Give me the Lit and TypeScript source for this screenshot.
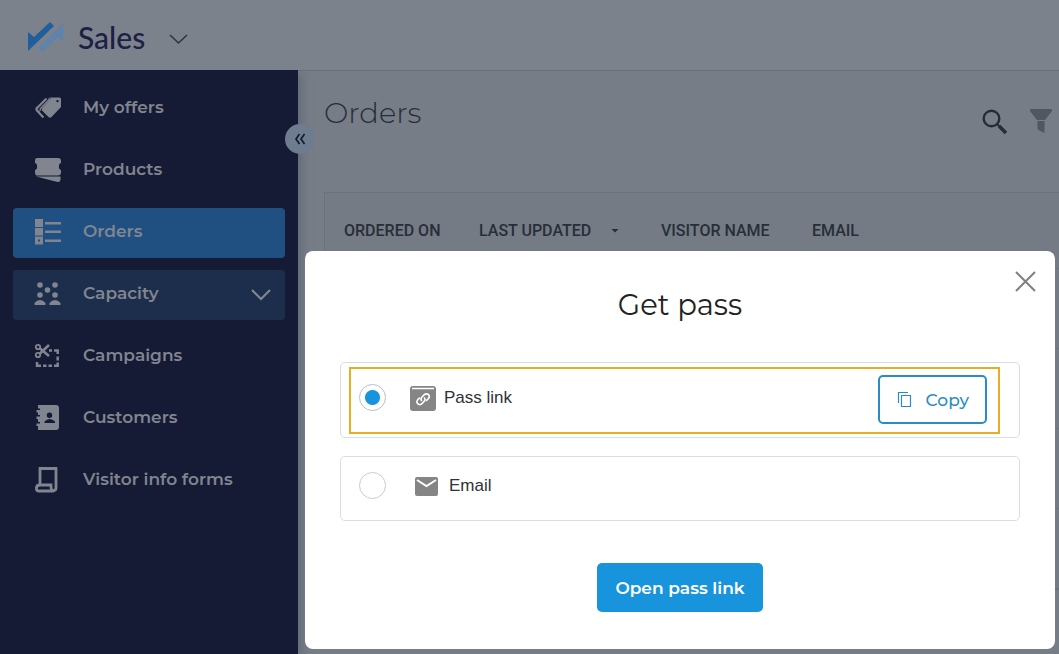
import { LitElement, html, css, svg } from "lit";
import { customElement, property, state } from "lit/decorators.js";

const icons: Record<string, unknown> = {
  offers: svg`<path fill="currentColor" fill-rule="evenodd" d="M15 3.500H25.500Q27 3.500 27 5V13L17.500 23.100Q16 24.500 14.500 23.100L8.400 17Q7 15.500 8.400 14L17 4.500ZM23.500 5.900A1.200 1.200 0 1 0 23.500 8.300A1.200 1.200 0 1 0 23.500 5.900Z"/><path d="M12.500 4.500L3.500 13.500Q1.500 15 3 16.500L9.500 23.500M16 4.500L6.200 14.500Q5 15.500 6.500 17" fill="none" stroke="currentColor" stroke-width="2.200"/><path d="M14.600 4.600L5.400 14.200Q4.600 15.200 5.600 16.400L12 23.500" fill="none" stroke="#151a35" stroke-width="1"/>`,
  products: svg`<path fill="currentColor" d="M3 2H24Q27 2 27 5V7Q24.500 8 25 10.500Q24.500 13 27 14V16Q27 19.500 24 19.500H3Q1 19.500 1 16V14Q3.500 13 3 10.500Q3.500 8 1 7V5Q1 2 3 2ZM2 20.500H26.500V24Q26 26.500 23.500 26Z"/>`,
  orders: svg`<path fill="currentColor" fill-rule="evenodd" d="M1 1H9V9H1ZM1 10H9V17.500H1ZM1 18.500H9V26.500H1ZM4 21.500V23.500H6V21.500ZM11 4H27V6.500H11ZM11 12.500H27V15H11ZM11 21.500H27V24H11Z"/>`,
  capacity: svg`<g fill="currentColor"><circle cx="6" cy="5" r="2.800"/><circle cx="21" cy="5" r="2.800"/><circle cx="13.500" cy="10" r="2.800"/><circle cx="6" cy="15" r="2.800"/><circle cx="21" cy="15" r="2.800"/><path d="M.500 25V23Q3 20 6 20T11.500 23V25ZM15.500 25V23Q18 20 21 20T26.500 23V25Z"/></g>`,
  campaigns: svg`<g fill="none" stroke="currentColor"><circle cx="4" cy="5" r="2.200" stroke-width="1.800"/><circle cx="4" cy="13" r="2.200" stroke-width="1.800"/><path stroke-width="2.600" d="M5.500 12L15 3M5.500 6L15 14"/><path stroke-width="2.500" d="M15 8.500H18M20 8.500H23.700V12M23.700 14.500V18.500M23.700 20.500V23.700H20M18 23.700H14.500M12.500 23.700H9M7 23.700H3V20"/></g>`,
  customers: svg`<path fill="currentColor" fill-rule="evenodd" d="M4 1H22Q25 1 25 4V23Q25 26 22 26H4V22H2.500V19.500H6V18H4V15H2.500V12.500H6V11H4V8.500H2.500V6H6V4.500H4ZM15.500 8.500A2.700 2.700 0 1 0 15.500 13.900A2.700 2.700 0 1 0 15.500 8.500ZM10.500 19H21V17.500Q18.500 15 15.700 15T10.500 17.500Z"/>`,
  forms: svg`<path fill="none" stroke="currentColor" stroke-width="2.800" d="M6 18V2.500H22V22Q22 25 18 25H5Q2 25 2.500 22Q2.500 19 6 19H17V21Q17 25 20 25"/>`,
};

const items = [
  ["offers", "My offers"],
  ["products", "Products"],
  ["orders", "Orders"],
  ["capacity", "Capacity"],
  ["campaigns", "Campaigns"],
  ["customers", "Customers"],
  ["forms", "Visitor info forms"],
];

@customElement("sales-nav")
class SalesNav extends LitElement {
  @property() current = "orders";

  static styles = css`
    :host { display: block; position: relative; background: #151a35; color: #80858f; box-shadow: 4px 4px 8px #656c77; }
    .list { display: flex; flex-direction: column; gap: 12px; margin: 0; padding: 14px 13px; list-style: none; }
    .item { display: flex; align-items: center; gap: 21px; box-sizing: border-box; height: 50px; padding: 0 13px 2px 21px; border-radius: 4px; color: inherit; font-size: 17px; line-height: 24px; font-weight: 600; text-decoration: none; }
    .current { background: #205081; }
    .group { background: #1c2e4b; }
    .icon { flex: none; }
    .label { flex: 1; padding-bottom: 2px; }
    .collapse { position: absolute; top: 54px; right: -17px; width: 30px; height: 30px; padding: 0; border: 0; border-radius: 50%; background: #6d7d8f; color: #151a35; display: grid; place-items: center; }
  `;

  render() {
    return html`<nav>
        <ul class="list">
          ${items.map(([id, label]) => html`<li>
            <a href="#${id}" class="item ${id === this.current ? "current" : ""} ${id === "capacity" ? "group" : ""}">
              <svg class="icon" width="28" height="28" viewBox="0 0 28 28" aria-hidden="true">${icons[id]}</svg>
              <span class="label">${label}</span>
              ${id === "capacity" ? html`<svg class="icon" width="22" height="14" viewBox="0 0 22 14" aria-hidden="true"><path d="M2 3L11 12L20 3" fill="none" stroke="currentColor" stroke-width="2.200"/></svg>` : ""}
            </a>
          </li>`)}
        </ul>
      </nav>
      <button class="collapse" aria-label="Collapse menu">
        <svg width="12" height="12" viewBox="0 0 12 12" aria-hidden="true"><path d="M5.500 1L2 6L5.500 11M10.500 1L7 6L10.500 11" fill="none" stroke="currentColor" stroke-width="1.700"/></svg>
      </button>`;
  }
}

@customElement("pass-dialog")
class PassDialog extends LitElement {
  @state() method = "link";

  static styles = css`
    :host { display: block; box-sizing: border-box; width: 750px; max-width: 100%; padding: 0 35px 37px; border-radius: 8px; background: #fff; color: #2f3237; position: relative; }
    .close { position: absolute; top: 19px; right: 18px; padding: 0; border: 0; background: none; color: #808080; display: block; line-height: 0; }
    .title { margin: 0; padding-top: 36px; font-size: 29px; line-height: 36px; font-weight: 400; text-align: center; color: #222; }
    .options { display: grid; gap: 18px; margin: 39px 0 42px; padding: 0; border: 0; }
    .option { box-sizing: border-box; border: 1px solid #dcdde0; border-radius: 5px; font: 17px/24px "Liberation Sans", Arial, sans-serif; }
    .link { padding: 4px 19px 3px 8px; }
    .marked { display: flex; align-items: center; justify-content: space-between; border: 2px solid #e5ae27; padding: 6px 11px 8px 8px; }
    .email { padding: 15px 19px 21px 18px; }
    .choice { display: flex; align-items: center; gap: 24px; }
    .marked .choice { padding-bottom: 4px; }
    .radio { appearance: none; box-sizing: border-box; width: 27px; height: 27px; margin: 0; border: 1px solid #c8cbd0; border-radius: 50%; background: #fff; }
    .radio:checked { border-color: #b4c0ca; background: radial-gradient(circle, #1794db 7px, #fff 8px); }
    .text { display: flex; align-items: center; gap: 8px; }
    .email .text { gap: 10px; padding-left: 4px; }
    .copy { display: flex; align-items: center; gap: 13px; box-sizing: border-box; height: 49px; padding: 0 16px 0 17px; border: 2px solid #2b8cc4; border-radius: 5px; background: #fff; color: #2b8cc4; font: 500 17px/24px Montserrat, Inter, sans-serif; }
    .actions { display: flex; justify-content: center; }
    .open { height: 49px; padding: 0 18px; border: 0; border-radius: 5px; background: #1794db; color: #fff; font: 600 17px/24px Montserrat, Inter, sans-serif; }
  `;

  render() {
    return html`<button class="close" aria-label="Close">
        <svg width="23" height="23" viewBox="0 0 23 23" aria-hidden="true"><path d="M2 2L21 21M21 2L2 21" fill="none" stroke="currentColor" stroke-width="2"/></svg>
      </button>
      <h2 class="title">Get pass</h2>
      <fieldset class="options" aria-label="Get pass">
        <div class="option link">
          <div class="marked">
            <label class="choice">
              <input class="radio" type="radio" name="method" .checked=${this.method === "link"} @change=${() => (this.method = "link")} />
              <span class="text">
                <svg width="26" height="26" viewBox="0 0 26 26" aria-hidden="true"><rect y="1" width="26" height="25" rx="3" fill="#858585"/><path d="M2 3.500H24" stroke="#fff" stroke-width="1.500"/><g fill="none" stroke="#fff" stroke-width="1.600" stroke-linecap="round"><path d="M11.500 15.500Q10.300 13.800 12 12L14.500 9.500Q17 8 18.800 10Q20 12 18.500 13.500L16.500 15.500"/><path d="M14.500 13Q15.700 14.800 14 16.500L11.500 19Q9 20.500 7.500 18.500Q6.200 16.800 7.500 15L9.500 13"/></g></svg>
                Pass link
              </span>
            </label>
            <button class="copy">
              <svg width="16" height="18" viewBox="0 0 16 18" aria-hidden="true"><path d="M1.500 12V1.500H11M4.500 4.500H13.500V15.500H4.500Z" fill="none" stroke="currentColor" stroke-width="1.200"/></svg>
              Copy
            </button>
          </div>
        </div>
        <div class="option email">
          <label class="choice">
            <input class="radio" type="radio" name="method" .checked=${this.method === "email"} @change=${() => (this.method = "email")} />
            <span class="text">
              <svg width="25" height="20" viewBox="0 0 25 20" aria-hidden="true"><rect x="1" y="1" width="23" height="19" rx="2" fill="#858585"/><path d="M3 4L12.500 10L22 4" fill="none" stroke="#fff" stroke-width="2"/></svg>
              Email
            </span>
          </label>
        </div>
      </fieldset>
      <div class="actions"><button class="open">Open pass link</button></div>`;
  }
}

@customElement("app-root")
class AppRoot extends LitElement {
  static styles = css`
    :host { display: grid; grid-template-rows: 70px 1fr; position: relative; min-height: 100vh; overflow: hidden; background: #767d87; font-family: Montserrat, Inter, sans-serif; }
    .bar { display: flex; align-items: center; padding: 3px 28px 0; background: #7b828b; box-sizing: border-box; position: relative; z-index: 1; }
    .brand { margin-left: 14px; padding-bottom: 0; color: #1c2045; font: 500 30px/36px Lato, sans-serif; }
    .switch { margin-left: 24px; padding: 6px 0 0; border: 0; background: none; color: #30353e; line-height: 0; }
    .body { display: grid; grid-template-columns: 298px 1fr; }
    .content { min-width: 0; padding: 22px 0 0 26px; color: #282e38; border-top: 1px solid #697079; }
    .head { display: flex; justify-content: space-between; align-items: center; height: 40px; padding-right: 7px; }
    .title { margin: 0; font-size: 29px; line-height: 40px; font-weight: 300; }
    .tools { display: flex; gap: 22px; padding-top: 18px; }
    .tool { padding: 0; border: 0; background: none; color: #252c36; line-height: 0; }
    .muted { color: #50575f; }
    .table { width: 100%; margin-top: 59px; border: 1px solid #6b727b; border-right: 0; border-collapse: separate; border-spacing: 0; table-layout: fixed; background: #747b84; font: 500 16px/20px Roboto, sans-serif; }
    .table th { height: 76px; padding: 0 0 0 19px; box-sizing: border-box; font-weight: 500; text-align: left; white-space: nowrap; border-bottom: 1px solid #6b727b; }
    .table td { height: 80px; box-sizing: border-box; border-bottom: 1px solid #6b727b; }
    .ordered { width: 135px; }
    .updated { width: 182px; }
    .visitor { width: 151px; }
    .caret { margin-left: 20px; vertical-align: 3px; }
    .layer { position: absolute; inset: 0; z-index: 2; display: flex; justify-content: flex-end; align-items: flex-end; padding: 0 4px 5px; }
  `;

  render() {
    return html`<header class="bar">
        <svg width="36" height="30" viewBox="0 0 36 30" aria-hidden="true"><path fill="#205f9b" d="M0 10L6 15L22 0L26 4L0 29Z"/><path fill="#5f83ab" d="M35.500 1V20L30 15L14 30L10 26Z"/></svg>
        <span class="brand">Sales</span>
        <button class="switch" aria-label="Switch application"><svg width="19" height="11" viewBox="0 0 19 11" aria-hidden="true"><path d="M1 1L9.500 9L18 1" fill="none" stroke="currentColor" stroke-width="1.600"/></svg></button>
      </header>
      <div class="body">
        <sales-nav></sales-nav>
        <main class="content">
          <div class="head">
            <h1 class="title">Orders</h1>
            <div class="tools">
              <button class="tool" aria-label="Search"><svg width="26" height="26" viewBox="0 0 26 26" aria-hidden="true"><circle cx="9.500" cy="9.500" r="7.800" fill="none" stroke="currentColor" stroke-width="2.400"/><path d="M15 15L17.500 17.500" stroke="currentColor" stroke-width="2"/><path d="M17 17L24 24" stroke="currentColor" stroke-width="3.600"/></svg></button>
              <button class="tool muted" aria-label="Filter"><svg width="22" height="26" viewBox="0 0 22 26" aria-hidden="true"><path fill="currentColor" d="M0 0H22V2L15 11H7L0 2ZM7.500 12H14.500V24L7.500 20.500Z"/></svg></button>
            </div>
          </div>
          <table class="table">
            <thead><tr>
              <th class="ordered" scope="col">ORDERED ON</th>
              <th class="updated" scope="col">LAST UPDATED<svg class="caret" width="8" height="4" viewBox="0 0 8 4" aria-hidden="true"><path d="M0.500 0H7.500L4 3.500Z" fill="currentColor"/></svg></th>
              <th class="visitor" scope="col">VISITOR NAME</th>
              <th scope="col">EMAIL</th>
            </tr></thead>
            <tbody>${[0, 1, 2, 3].map(() => html`<tr><td colspan="4"></td></tr>`)}</tbody>
          </table>
        </main>
      </div>
      <div class="layer"><pass-dialog role="dialog" aria-label="Get pass"></pass-dialog></div>`;
  }
}
